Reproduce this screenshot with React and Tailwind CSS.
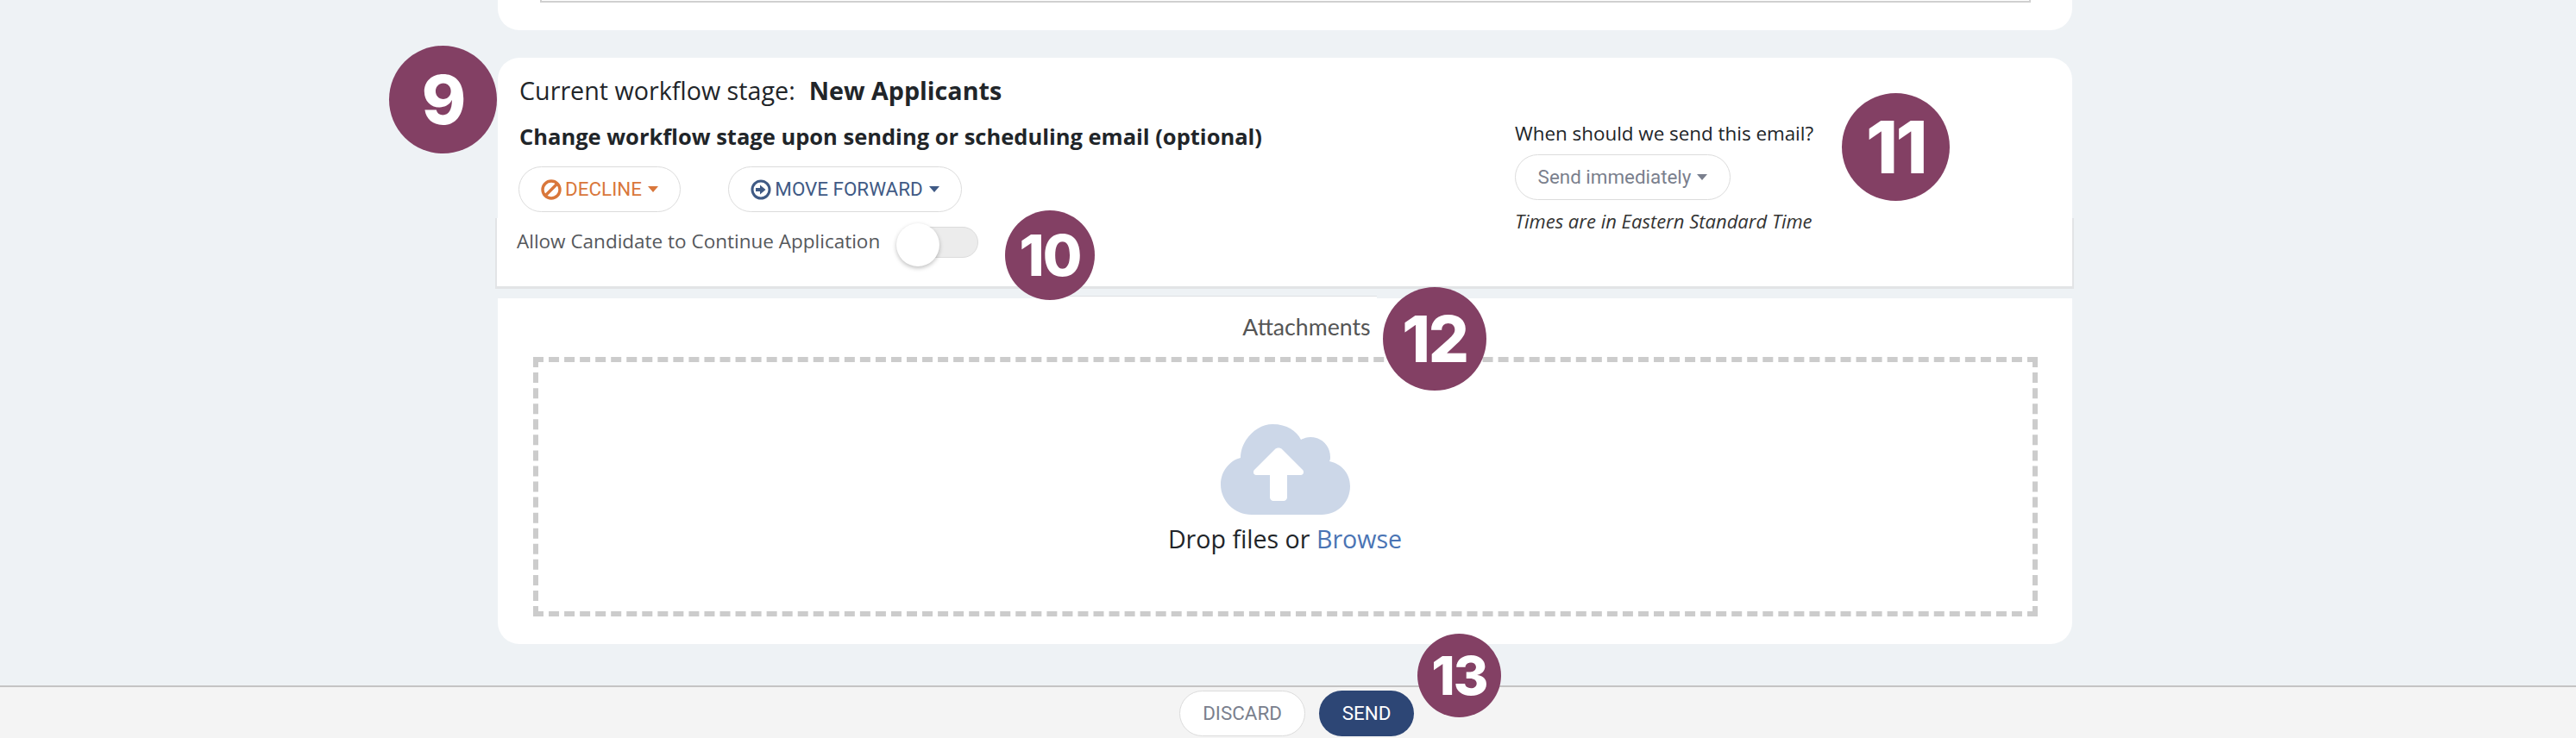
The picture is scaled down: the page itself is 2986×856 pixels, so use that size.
const open = "font-['Open_Sans',sans-serif]";
const roboto = "font-['Roboto',sans-serif]";

function Badge({ className, children }) {
  return (
    <div className={`absolute flex items-center justify-center rounded-full bg-[#834064] text-white font-['Inter',sans-serif] font-extrabold tracking-[-0.03em] ${className}`}>
      {children}
    </div>
  );
}

function Caret({ className }) {
  return <span className={`ml-[7px] inline-block h-0 w-0 border-x-[6px] border-t-[7px] border-x-transparent ${className}`} />;
}

function Pill({ className, children }) {
  return (
    <button className={`flex h-[53px] items-center justify-center rounded-[27px] border border-[#dcdcdc] bg-white ${roboto} text-[22.4px] ${className}`}>
      {children}
    </button>
  );
}

export default function App() {
  return (
    <div className={`relative h-[856px] w-[2986px] overflow-hidden bg-[#eef2f5] ${open} text-[#212529]`}>
      <div className="flex h-[795px] flex-col items-center pr-[7px]">
        <div className="h-[35px] w-[1825px] rounded-b-[25px] bg-white px-[49px]">
          <div className="h-[3px] w-[1728px] border-x-2 border-b-2 border-[#d0d0d0]" />
        </div>

        <div className="relative mt-[32px] flex h-[268px] w-[1825px] justify-between rounded-t-[25px] bg-white">
          <div className="absolute -left-[3px] -right-[2px] bottom-0 top-[186px] border-x-2 border-b-[3px] border-[#e2e4e6] bg-white" />
          <div className="relative pl-[25px]">
            <div className="mt-[19px] flex h-[38px] items-center text-[28.7px] leading-[38px]">
              <span>Current workflow stage:</span>
              <span className="ml-[16px] font-bold">New Applicants</span>
            </div>
            <div className="mt-[15px] h-[38px] text-[25.5px] font-bold leading-[38px]">
              Change workflow stage upon sending or scheduling email (optional)
            </div>
            <div className="-ml-[1px] mt-[16px] flex gap-[55px]">
              <Pill className="w-[188px] text-[#d9773b]">
                <svg width="24" height="24" viewBox="0 0 24 24" fill="none" stroke="currentColor" strokeWidth="3.4" className="mr-[4px]">
                  <circle cx="12" cy="12" r="10" />
                  <path d="M5 19 19 5" />
                </svg>
                DECLINE
                <Caret className="border-t-[#d9773b]" />
              </Pill>
              <Pill className="w-[271px] text-[#3f5a85]">
                <svg width="24" height="24" viewBox="0 0 24 24" className="mr-[4px]">
                  <circle cx="12" cy="12" r="10" fill="none" stroke="currentColor" strokeWidth="3" />
                  <path d="M6 10h5V6.5l6.5 5.5-6.5 5.5V14H6z" fill="currentColor" />
                </svg>
                MOVE FORWARD
                <Caret className="border-t-[#3f5a85]" />
              </Pill>
            </div>
            <div className="-ml-[3px] mt-[15px] flex items-center">
              <span className="text-[22.5px] leading-[36px] text-[#55585c]">Allow Candidate to Continue Application</span>
              <div className="relative ml-[21px] mt-[2px] h-[36px] w-[93px] rounded-[18px] border border-[#dcdcdc] bg-[#ececec]">
                <div className="absolute -left-[3px] -top-[5px] h-[50px] w-[50px] rounded-full bg-white shadow-[0_2px_5px_rgba(0,0,0,0.25)]" />
              </div>
            </div>
          </div>

          <div className="relative mr-[298px] w-[348px] pt-[73px]">
            <div className="whitespace-nowrap text-[22.4px] leading-[30px]">When should we send this email?</div>
            <Pill className="mt-[9px] w-[250px] text-[#7a7f8d]">
              Send immediately
              <Caret className="border-t-[#7a7f8d]" />
            </Pill>
            <div className="mt-[9px] whitespace-nowrap text-[22px] italic leading-[30px] text-[#333]">Times are in Eastern Standard Time</div>
          </div>
        </div>

        <div className="relative mt-[11px] flex h-[401px] w-[1825px] flex-col items-center rounded-b-[25px] bg-white px-[40px] pt-[18px]">
          <div className="absolute left-[640px] -top-[3px] h-[3px] w-[379px] border-t border-[#dfe0e4] bg-white" />
          <div className="ml-[50px] h-[30px] font-['Lato',sans-serif] text-[26.7px] leading-[30px] text-[#555]">Attachments</div>
          <div className="mt-[20px] flex h-[301px] w-[1744px] flex-col items-center border-[6px] border-dashed border-[#cccccc] pt-[72px]">
            <svg width="150" height="105" viewBox="0 0 150 105">
              <path d="M36 105C16 105 0 89 0 70 0 54 11 42 23 39 23 18 42 0 60 0c17 0 28 8 33 18 4-2 7-3 11-3 14 0 23 11 23 23 0 2 0 3-1 5 14 3 24 14 24 29 0 19-15 33-33 33z" fill="#ccd7e8" />
              <path d="M63 29c2-2 6-2 8 0l24 24c2 2 1 6-2 6H77v26c0 2-2 4-4 4H61c-2 0-4-2-4-4V59H41c-3 0-4-4-2-6z" fill="#fff" />
            </svg>
            <div className="mt-[9px] text-[28.6px] leading-[38px]">
              Drop files or <span className="text-[#4a74b4]">Browse</span>
            </div>
          </div>
        </div>
      </div>

      <div className="flex h-[61px] items-start justify-center gap-[16px] border-t-2 border-[#c4c4c4] bg-[#f4f4f4] pl-[20px] pt-[4px]">
        <Pill className="w-[146px] text-[#7a7f8d]">DISCARD</Pill>
        <button className={`h-[53px] w-[110px] rounded-[27px] bg-[#2d4675] ${roboto} text-[22.4px] text-white`}>SEND</button>
      </div>

      <Badge className="left-[451px] top-[53px] h-[125px] w-[125px] text-[78px]">9</Badge>
      <Badge className="left-[1165px] top-[244px] h-[104px] w-[104px] text-[66px]">10</Badge>
      <Badge className="left-[2135px] top-[108px] h-[125px] w-[125px] text-[84px]">11</Badge>
      <Badge className="left-[1603px] top-[333px] h-[120px] w-[120px] text-[74px]">12</Badge>
      <Badge className="left-[1643px] top-[735px] h-[97px] w-[97px] text-[62px]">13</Badge>
    </div>
  );
}
